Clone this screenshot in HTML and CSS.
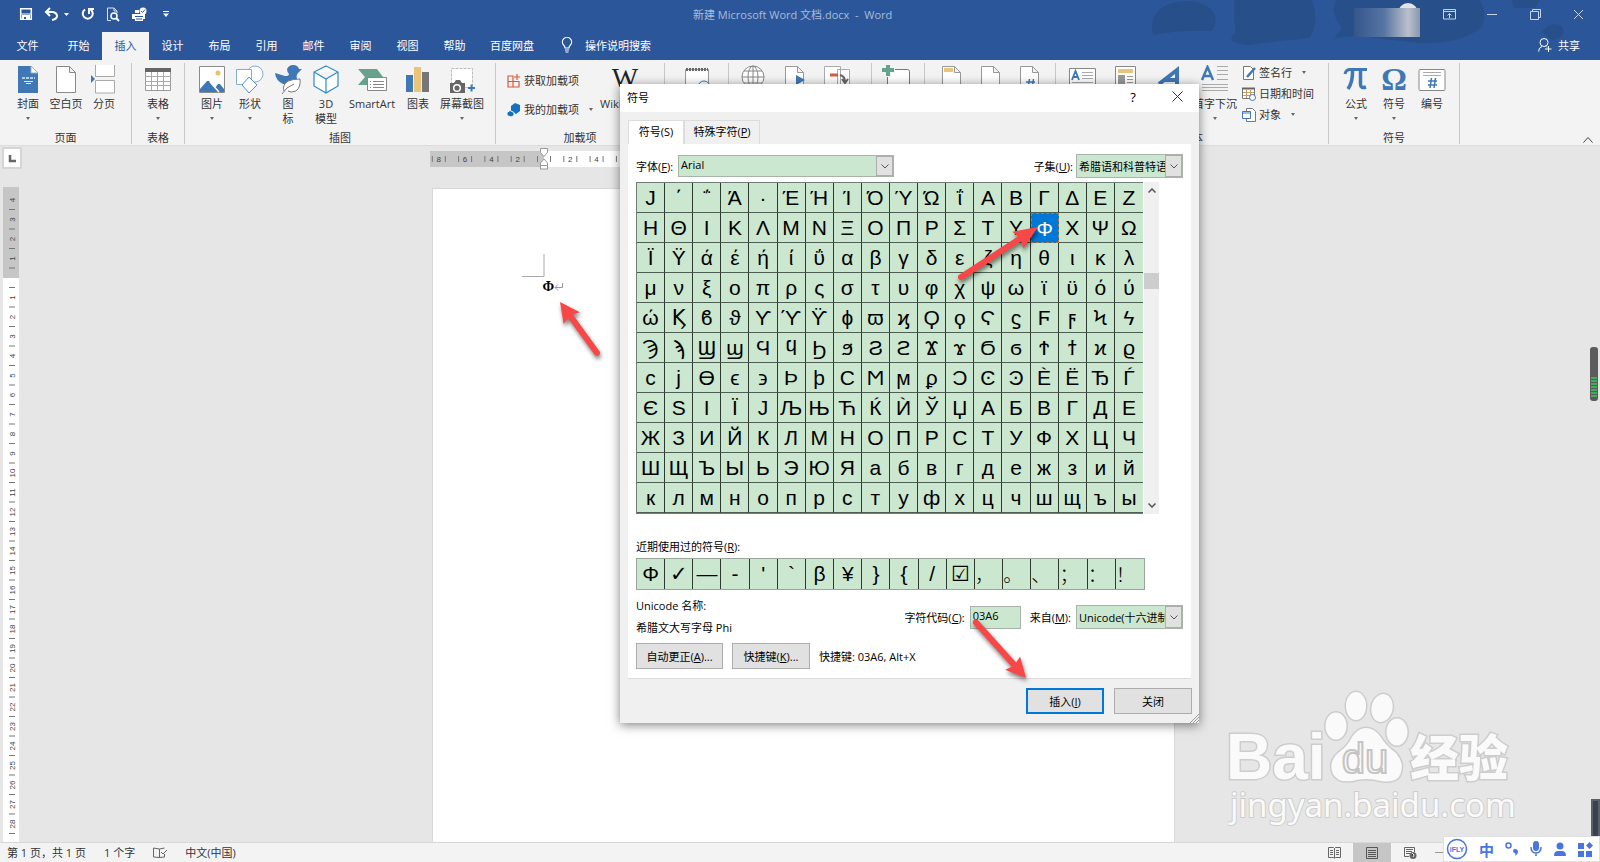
FILE: index.html
```html
<!DOCTYPE html>
<html lang="zh-CN">
<head>
    <meta charset="UTF-8">
    <meta name="viewport" content="width=device-width, initial-scale=1.0">
    <title>新建 Microsoft Word 文档.docx - Word</title>
    <link rel="stylesheet" href="styles.css">
</head>
<body>

<header class="header">
    <svg class="clouds" width="450" height="60" viewBox="0 0 450 60">
        <path d="M3 35Q-2 10 22 3Q45 -3 60 8Q70 20 62 31Q30 30 3 35zM84 0H162Q170 20 160 38Q120 42 100 45Q78 44 82 36Q88 34 84 20zM186 0H330Q338 15 332 27Q310 45 268 43L225 38Q200 34 184 39Q188 32 192 28Q180 15 186 0zM362 0H390L385 8H364zM392 32Q400 20 412 26Q418 38 402 40z"/>
    </svg>
    <div class="titlebar">
        <div class="quick">
            <button aria-label="保存"><svg width="14" height="14" viewBox="0 0 14 14"><path fill="none" stroke="#fff" stroke-width="1.5" d="M1.7 1.7h10.6v10.6H1.7z"/><path fill="#fff" d="M3 8h8v5H3z"/><path fill="#2b579a" d="M5 10h2v2H5z"/><path stroke="#fff" d="M2 7h10"/></svg></button>
            <button aria-label="撤消"><svg width="26" height="14" viewBox="0 0 26 14"><path fill="none" stroke="#fff" stroke-width="2" d="M2 5h7q4 1 4 4t-5 4M6 1L2 5l4 4"/><path fill="#fff" d="M20 6h5l-2.5 3z"/></svg></button>
            <button aria-label="恢复"><svg width="14" height="14" viewBox="0 0 14 14"><path fill="none" stroke="#fff" stroke-width="2" d="M4 2.500A5 5 0 1 0 9.500 2.500M8 7V2h5"/></svg></button>
            <button aria-label="打印预览"><svg width="14" height="15" viewBox="0 0 14 15"><path fill="none" stroke="#dbe4f2" d="M5 13.500H1.500V1H8l3 3v2M8 1v3h3"/><circle cx="8" cy="9" r="3" fill="none" stroke="#fff" stroke-width="1.500"/><path stroke="#fff" stroke-width="2" d="M10 11l3 3"/></svg></button>
            <button aria-label="快速打印"><svg width="16" height="15" viewBox="0 0 16 15"><path fill="#fff" d="M1 7h13v5h-2v2H4v-2H1zM4 3h4v3H4z"/><path fill="none" stroke="#2b579a" d="M4 9.500h8M5 12h6"/><circle cx="12" cy="4" r="3.500" fill="#fff"/><path fill="none" stroke="#2b579a" d="M10 4l1.500 1.500L14 2.500"/></svg></button>
            <button aria-label="自定义快速访问工具栏"><svg width="6" height="6" viewBox="0 0 6 6"><path stroke="#fff" d="M0 .5h6"/><path fill="#fff" d="M0 2.500h6L3 6z"/></svg></button>
        </div>
        <div class="doc-title">新建 Microsoft Word 文档.docx&nbsp; -&nbsp; Word</div>
        <svg class="avatar" width="66" height="34" viewBox="0 0 66 34">
            <defs><linearGradient id="fade"><stop offset="0" stop-color="#34568c"/><stop offset=".45" stop-color="#5674a2"/><stop offset=".82" stop-color="#b9c0ca"/><stop offset="1" stop-color="#8998b0"/></linearGradient></defs>
            <circle cx="54" cy="10" r="10" fill="#e4e4e4"/>
            <path fill="url(#fade)" d="M0 5h66v29H0z"/>
        </svg>
        <div class="window-buttons">
            <button aria-label="功能区显示选项"><svg width="13" height="11" viewBox="0 0 13 11"><path fill="none" stroke="#c6d3e8" d="M.5.5h12v9.500H.5zM.5 2.500h12M6.500 9V4.500M4.500 6.500l2-2 2 2"/></svg></button>
            <button aria-label="最小化"><svg width="11" height="11" viewBox="0 0 11 11"><path stroke="#c6d3e8" d="M0 5.500h10"/></svg></button>
            <button aria-label="还原"><svg width="11" height="11" viewBox="0 0 11 11"><path fill="none" stroke="#c6d3e8" d="M.5 2.500h8v8h-8zM2.500 2.500v-2h8v8h-2"/></svg></button>
            <button aria-label="关闭"><svg width="11" height="11" viewBox="0 0 11 11"><path stroke="#c6d3e8" d="M1 1l9 9M10 1l-9 9"/></svg></button>
        </div>
    </div>
    <nav class="tabs">
        <button class="tab tab-file">文件</button>
        <button class="tab">开始</button>
        <button class="tab active">插入</button>
        <button class="tab">设计</button>
        <button class="tab">布局</button>
        <button class="tab">引用</button>
        <button class="tab">邮件</button>
        <button class="tab">审阅</button>
        <button class="tab">视图</button>
        <button class="tab">帮助</button>
        <button class="tab tab-wide">百度网盘</button>
        <button class="tell-me"><svg width="12" height="16" viewBox="0 0 12 16"><path fill="none" stroke="#fff" stroke-width="1.200" d="M4 11Q4 9 2.500 8A4.600 4.600 0 1 1 9.500 8Q8 9 8 11zM4 13h4M4.500 15h3"/></svg>操作说明搜索</button>
        <button class="share"><svg width="14" height="14" viewBox="0 0 14 14"><circle cx="6" cy="4.500" r="4" fill="none" stroke="#fff"/><path fill="none" stroke="#fff" d="M.5 13.500Q1 9 4 8.500M8 8.500l1 1M7 11h6.500M10.500 8v6"/></svg>共享</button>
    </nav>
</header>

<section class="ribbon">
    <div class="group g-page">
        <div class="tools">
            <button class="tool"><svg width="30" height="30" viewBox="0 0 30 30"><path fill="#3f78b5" d="M5 1h13l7 7v20H5z"/><path fill="#fff" stroke="#8fb1d6" d="M18 1v7h7z"/><path stroke="#dce8f4" stroke-width="1.500" stroke-dasharray="3 1" d="M9 13h13"/><path stroke="#dce8f4" d="M11 16.500h9M13 18.500h5"/></svg>封面<i class="caret"></i></button>
            <button class="tool"><svg width="30" height="30" viewBox="0 0 30 30"><path fill="#fff" stroke="#8a8a8a" d="M5.500 1.500h13l6 6v20h-19zM18.500 1.500v6h6"/></svg>空白页</button>
            <button class="tool"><svg width="30" height="30" viewBox="0 0 30 30"><path fill="#fff" stroke="#aaa" d="M6.500 0v11.500h19V0M6.500 28V15.500h19V28z"/><path fill="#3f78b5" d="M2 10l4 4-4 4z"/></svg>分页</button>
        </div>
        <div class="group-name">页面</div>
    </div>
    <div class="group g-table">
        <div class="tools">
            <button class="tool"><svg width="30" height="30" viewBox="0 0 30 30"><path fill="#fff" stroke="#999" d="M2.500 3.500h25v22h-25z"/><path fill="#666" d="M2 3h26v4H2z"/><path fill="none" stroke="#aaa" d="M2 11.500h26M2 16.500h26M2 20.500h26M8.500 7v18M14.500 7v18M20.500 7v18"/></svg>表格<i class="caret"></i></button>
        </div>
        <div class="group-name">表格</div>
    </div>
    <div class="group g-pictures">
        <div class="tools">
            <button class="tool"><svg width="30" height="30" viewBox="0 0 30 30"><path fill="#fff" stroke="#8a8a8a" d="M2.500 1.500h25v26h-25z"/><path fill="#3f78b5" d="M3 24l7-8h2l6 7 3-4h2l4 5v3H3z"/><path stroke="#fff" stroke-width="1.500" d="M13 17l9 10"/><circle cx="21" cy="8" r="2.500" fill="#e9bf70"/></svg>图片<i class="caret"></i></button>
            <button class="tool"><svg width="30" height="30" viewBox="0 0 30 30"><circle cx="20" cy="9" r="8" fill="#fff" stroke="#85aed6"/><path fill="#fff" stroke="#85aed6" d="M1.500 4.500h15v15h-15z"/><path fill="#fff" stroke="#5a93cb" d="M14 12l8 8-8 8-7-8z"/></svg>形状<i class="caret"></i></button>
            <button class="tool"><svg width="30" height="30" viewBox="0 0 30 30"><path fill="#3f78b5" d="M14 4Q16 0 20 0q5 0 6 4h3l-4 4Q23 10 24 14q-6 7-14 5Q3 16 2 8l10 3q4 0 4-2-2-2-2-5z"/><path fill="#fff" stroke="#777" d="M11 26Q9 20 15 16q5-2 12-2Q28 22 23 26q-5 2-8 0M9 29Q13 22 21 19"/></svg><span>图<br>标</span></button>
            <button class="tool"><svg width="30" height="30" viewBox="0 0 30 30"><path fill="#fff" stroke="#2f8bcb" stroke-width="1.200" d="M15 1l12 6v14l-12 7-12-7V7zM3 7l12 7 12-7M15 14v14"/></svg><span>3D<br>模型</span></button>
            <button class="tool tool-smart"><svg width="30" height="30" viewBox="0 0 30 30"><path fill="#67a38c" d="M1 4h19l6 8v8H1l7-8z"/><path fill="#fff" stroke="#888" d="M10.500 12.500h19v13h-19z"/><path stroke="#888" d="M13 16.500h1m2 0h11M13 19.500h1m2 0h11M13 22.500h1m2 0h11"/></svg>SmartArt</button>
            <button class="tool"><svg width="30" height="30" viewBox="0 0 30 30"><path fill="#3f78b5" d="M3 10h7v17H3z"/><path fill="#e9c47a" d="M11 2h7v25h-7z"/><path fill="#777" d="M19 7h7v20h-7z"/></svg>图表</button>
            <button class="tool tool-shot"><svg width="30" height="30" viewBox="0 0 30 30"><path fill="#fff" stroke="#bbb" stroke-dasharray="3 1" d="M4.500 3.500h21v19h-21z"/><path fill="#666" d="M3 18h4l2-3h4l2 3h3v10H3z"/><circle cx="10" cy="23" r="3.300" fill="#666" stroke="#fff" stroke-width="1.500"/><path stroke="#3f78b5" stroke-width="2" d="M21 23h7M24.500 19.500v7"/></svg>屏幕截图<i class="caret"></i></button>
        </div>
        <div class="group-name">插图</div>
    </div>
    <div class="group g-addins">
        <div class="tools">
            <div class="addin-list">
                <button class="small-tool"><svg width="14" height="14" viewBox="0 0 14 14"><path fill="none" stroke="#d65b3d" stroke-width="1.200" d="M1 2h5v11H1zM1 7.500h11V13H6M10 0v6M7 3h6"/></svg>获取加载项</button>
                <button class="small-tool"><svg width="14" height="14" viewBox="0 0 14 14"><path fill="#1470c0" d="M8 0l5 2v6l-4 3-5-3V3z"/><path fill="#1470c0" stroke="#f3f3f3" d="M3 7.500l4 2v3L4 14l-4-1.500v-3z"/></svg>我的加载项<i class="caret"></i></button>
            </div>
            <button class="tool tool-wiki"><svg width="30" height="30" viewBox="0 0 30 30"><text x="15" y="22" text-anchor="middle" class="icon-serif">W</text></svg>Wikipedia</button>
        </div>
        <div class="group-name">加载项</div>
    </div>
    <div class="group g-media">
        <div class="tools"><button class="tool" aria-label="联机视频"><svg width="30" height="30" viewBox="0 0 30 30"><path fill="#fff" stroke="#999" d="M3.500 4.500h23v24h-23z"/><path stroke="#666" stroke-width="3" stroke-dasharray="2 1" d="M4 4.500h22"/><circle cx="22" cy="22" r="6" fill="#fff" stroke="#3f78b5"/></svg></button></div>
    </div>
    <div class="group g-links">
        <div class="tools">
            <button class="tool" aria-label="链接"><svg width="30" height="30" viewBox="0 0 30 30"><g fill="none" stroke="#888"><circle cx="15" cy="12" r="11" fill="#fff"/><ellipse cx="15" cy="12" rx="5" ry="11"/><path d="M15 1v22M4 12h22M6 6h18M6 18h18"/></g></svg></button>
            <button class="tool" aria-label="书签"><svg width="30" height="30" viewBox="0 0 30 30"><path fill="#fff" stroke="#999" d="M5.500 1.500h12l6 6v20h-18zM17.500 1.500v6h6"/><path fill="#3f78b5" d="M16 10l9 5-9 5z"/></svg></button>
            <button class="tool" aria-label="交叉引用"><svg width="30" height="30" viewBox="0 0 30 30"><path fill="#fff" stroke="#aaa" d="M15.500 4.500h12v20h-12zM2.500 1.500h16v26h-16z"/><path stroke="#d65b3d" stroke-width="3" d="M8 10h8"/><path fill="none" stroke="#666" stroke-width="2" d="M18 10q5 1 5 7M20 14l3 4 3-4"/></svg></button>
        </div>
    </div>
    <div class="group g-comment">
        <div class="tools"><button class="tool" aria-label="批注"><svg width="30" height="30" viewBox="0 0 30 30"><path fill="#fff" stroke="#777" d="M5.500 4.500h20q2 0 2 2v20h-22z"/><path stroke="#f3f3f3" stroke-width="6" d="M0 5h13M6 0v12"/><path stroke="#67a38c" stroke-width="4" d="M0 5h12M6 0v11"/></svg></button></div>
    </div>
    <div class="group g-header">
        <div class="tools">
            <button class="tool" aria-label="页眉"><svg width="30" height="30" viewBox="0 0 30 30"><path fill="#fff" stroke="#999" d="M5.500 1.500h12l6 6v20h-18zM17.500 1.500v6h6"/><path fill="#e9c47a" d="M7 3h9v4H7z"/></svg></button>
            <button class="tool" aria-label="页脚"><svg width="30" height="30" viewBox="0 0 30 30"><path fill="#fff" stroke="#999" d="M5.500 1.500h12l6 6v20h-18zM17.500 1.500v6h6"/></svg></button>
            <button class="tool" aria-label="页码"><svg width="30" height="30" viewBox="0 0 30 30"><path fill="#fff" stroke="#999" d="M5.500 1.500h12l6 6v20h-18zM17.500 1.500v6h6"/><path stroke="#3f78b5" stroke-width="1.500" d="M11 17h9M11 20h9M14.500 14l-1.500 9M18.500 14l-1.500 9"/></svg></button>
        </div>
    </div>
    <div class="group g-text">
        <div class="tools">
            <button class="tool tool-text" aria-label="文本框"><svg width="30" height="30" viewBox="0 0 30 30"><path fill="#fff" stroke="#888" d="M1.500 3.500h26v22h-26z"/><path fill="none" stroke="#3f78b5" stroke-width="1.800" d="M4 15l3.500-9L11 15M5 12h5"/><path stroke="#aaa" d="M14 7.500h11M14 10.500h11M14 13.500h11M4 17.500h21"/></svg></button>
            <button class="tool tool-text" aria-label="文档部件"><svg width="30" height="30" viewBox="0 0 30 30"><path fill="#fff" stroke="#888" d="M3.500 1.500h20v26h-20z"/><path fill="#e9c47a" d="M6 4h15v4H6z"/><path fill="#999" d="M6 10h7v9H6z"/><path stroke="#999" d="M15 11.500h6M15 14.500h6M15 17.500h6"/></svg></button>
            <button class="tool tool-text" aria-label="艺术字"><svg width="30" height="30" viewBox="0 0 30 30"><path fill="none" stroke="#3f78b5" stroke-width="4" d="M3 19L21 5v15M9 15h12"/></svg></button>
            <button class="tool tool-text"><svg width="30" height="30" viewBox="0 0 30 30"><path fill="none" stroke="#3f78b5" stroke-width="2.500" d="M2 15L7.500 2 13 15M4 11h7"/><path stroke="#aaa" d="M17 1.500h11M17 5.500h11M17 9.500h11M17 14.500h11M2 19.500h26M2 22.500h26M2 25.500h26"/></svg>首字下沉<i class="caret"></i></button>
            <div class="text-list">
                <button class="small-tool"><svg width="14" height="14" viewBox="0 0 14 14"><path fill="#fff" stroke="#777" d="M1.500.5h7l3 3v10h-10z"/><path stroke="#3f78b5" stroke-width="2.500" d="M5 11l8-9"/></svg>签名行<i class="caret"></i></button>
                <button class="small-tool"><svg width="14" height="14" viewBox="0 0 14 14"><path fill="#fff" stroke="#777" d="M.5 1.500h12v10H.5z"/><path stroke="#666" stroke-width="2" d="M0 1.500h13"/><path fill="none" stroke="#c9a06a" d="M1 5.500h11M1 8.500h11M4.500 3v8M8.500 3v8"/><circle cx="10.500" cy="10.500" r="3" fill="#fff" stroke="#3f78b5"/></svg>日期和时间</button>
                <button class="small-tool"><svg width="14" height="14" viewBox="0 0 14 14"><path fill="#fff" stroke="#777" d="M4.500.5h6l3 3v10h-9z"/><path fill="#fff" stroke="#3f78b5" d="M.5 3.500h8v7h-8zM.5 5h8"/></svg>对象<i class="caret"></i></button>
            </div>
        </div>
        <div class="group-name">文本</div>
    </div>
    <div class="group g-symbols">
        <div class="tools">
            <button class="tool"><svg width="30" height="30" viewBox="0 0 30 30"><path fill="none" stroke="#3f78b5" stroke-width="3" d="M4 9Q5 4.500 9 4.500H26"/><path fill="none" stroke="#3f78b5" stroke-width="3.500" d="M11.500 5Q12 17 7 24M19.500 5v14q0 5 5.500 3"/></svg>公式<i class="caret"></i></button>
            <button class="tool"><svg width="30" height="30" viewBox="0 0 30 30"><text x="15" y="25" text-anchor="middle" class="icon-omega">Ω</text></svg>符号<i class="caret"></i></button>
            <button class="tool"><svg width="30" height="30" viewBox="0 0 30 30"><rect x="2" y="4.500" width="26" height="21" rx="1" fill="#fff" stroke="#888"/><path stroke="#aaa" d="M6 7.500h18M6 10.500h18"/><path stroke="#3f78b5" stroke-width="1.500" d="M11 16h9M11 20h9M14.500 13l-1.500 10M18.500 13l-1.500 10"/></svg>编号</button>
        </div>
        <div class="group-name">符号</div>
    </div>
    <button class="collapse" aria-label="折叠功能区"><svg width="10" height="6" viewBox="0 0 10 6"><path fill="none" stroke="#444" d="M.5 5.500l4.500-5 4.500 5"/></svg></button>
</section>

<main class="workspace">
    <div class="ruler-row">
        <button class="tab-stop" aria-label="左对齐式制表符"><svg width="8" height="8" viewBox="0 0 8 8"><path fill="none" stroke="#666" stroke-width="2.500" d="M2 0v6h6"/></svg></button>
        <svg class="h-ruler" id="hRuler" width="744" height="24"></svg>
    </div>
    <svg class="v-ruler" id="vRuler" width="16" height="656"></svg>
    <article class="page">
        <svg class="corner" width="24" height="24" viewBox="0 0 24 24"><path fill="none" stroke="#aaa" d="M1 22.500h22V0"/></svg>
        <p class="page-text">Φ<svg width="9" height="8" viewBox="0 0 9 8"><path fill="none" stroke="#999" d="M8.500 0v4.500H1M4 1.500l-3 3 3 3"/></svg></p>
    </article>
    <svg class="meter" width="8" height="54" viewBox="0 0 8 54"><rect width="8" height="54" rx="3" fill="#5c5c5c"/><path stroke="#3fae5c" stroke-width="6" stroke-dasharray="2 1" d="M4 30v21"/></svg>
    <div class="side-handle"></div>
    <svg class="watermark" width="300" height="140" viewBox="0 0 300 140">
        <g class="wm-shape">
            <text x="-2" y="89" class="wm-bai">Bai</text>
            <ellipse cx="108" cy="36" rx="10.500" ry="13.500"/>
            <ellipse cx="128" cy="16" rx="10" ry="14"/>
            <ellipse cx="154" cy="18" rx="10.500" ry="14" transform="rotate(12 154 18)"/>
            <ellipse cx="169" cy="42" rx="10.500" ry="13.500"/>
            <path d="M138 38Q146 38 152 46Q158 56 168 63Q178 75 171 87Q165 93 153 91Q138 87 124 91Q110 93 105 84Q100 72 110 63Q120 56 124 47Q130 38 138 38z"/>
            <text x="182" y="86" class="wm-cn">经验</text>
        </g>
        <text x="137" y="83" text-anchor="middle" class="wm-du">du</text>
        <text x="2" y="127" class="wm-url">jingyan.baidu.com</text>
    </svg>
</main>

<footer class="status">
    <span>第 1 页，共 1 页</span>
    <span>1 个字</span>
    <svg width="14" height="12" viewBox="0 0 14 12"><path fill="none" stroke="#666" d="M6.500 10.500l-6-.5V1l6 1v9M6.500 2l5-1M6.500 10.500l5-.5V7M8 5l2 2 4-4"/></svg>
    <span>中文(中国)</span>
    <div class="views">
        <button aria-label="阅读视图"><svg width="13" height="12" viewBox="0 0 13 12"><path fill="none" stroke="#666" d="M.5.5h5l1 1 1-1h5v10h-5l-1 1-1-1h-5zM6.500 1v10M2 3.500h3M2 5.500h3M2 7.500h3M8 3.500h3M8 5.500h3M8 7.500h3"/></svg></button>
        <button class="selected" aria-label="页面视图"><svg width="12" height="12" viewBox="0 0 12 12"><path fill="none" stroke="#555" d="M.5.5h11v11H.5zM2 3.500h8M2 5.500h8M2 7.500h8M2 9.500h8"/></svg></button>
        <button aria-label="Web 版式视图"><svg width="13" height="12" viewBox="0 0 13 12"><path fill="none" stroke="#666" d="M5 9.500H.5v-9h10V5M2 2.500h7M2 4.500h6M2 6.500h4"/><circle cx="9" cy="8.500" r="3.500" fill="#666"/><path stroke="#f3f3f3" d="M8 6l2 2-1 2"/></svg></button>
        <button class="zoom-out" aria-label="缩小"><svg width="8" height="1" viewBox="0 0 8 1"><path fill="#999" d="M0 0h8v1H0z"/></svg></button>
    </div>
    <div class="ime">
        <svg width="22" height="22" viewBox="0 0 22 22"><circle cx="11" cy="11" r="9.500" fill="none" stroke="#4a74e0" stroke-width="1.500"/><text x="11" y="14" text-anchor="middle" class="ime-logo">iFLY</text></svg>
        <span class="ime-cn">中</span>
        <svg width="14" height="14" viewBox="0 0 14 14"><circle cx="3.500" cy="3.500" r="2.500" fill="none" stroke="#4a74e0" stroke-width="1.500"/><path fill="#4a74e0" d="M8 9q0-2 2-2 3 0 3 3 0 2-3 4 1-2 0-3-2 0-2-2z"/></svg>
        <svg width="12" height="16" viewBox="0 0 12 16"><rect x="3" width="6" height="10" rx="3" fill="#4a74e0"/><path fill="none" stroke="#4a74e0" stroke-width="1.500" d="M1 6q0 6 5 6t5-6M6 12v3"/></svg>
        <svg width="14" height="15" viewBox="0 0 14 15"><circle cx="7" cy="4" r="3.500" fill="#4a74e0"/><path fill="#4a74e0" d="M1 14q0-5 4-5h4q4 0 4 5z"/></svg>
        <svg width="15" height="15" viewBox="0 0 15 15"><path fill="#4a74e0" d="M0 1h6v6H0zM0 9h6v6H0zM8 9h6v6H8zM11.500 0L15 3.500 11.500 7 8 3.500z"/></svg>
    </div>
</footer>

<div class="dialog" role="dialog" aria-labelledby="dialogTitle">
    <div class="dialog-title">
        <span id="dialogTitle">符号</span>
        <button aria-label="帮助">?</button>
        <button aria-label="关闭"><svg width="11" height="11" viewBox="0 0 11 11"><path stroke="#333" d="M.5.5l10 10M10.500.5l-10 10"/></svg></button>
    </div>
    <div class="dialog-tabs">
        <button class="dialog-tab current">符号(S)</button>
        <button class="dialog-tab">特殊字符(<u>P</u>)</button>
    </div>
    <div class="pane">
        <div class="field-row">
            <label for="font">字体(<u>F</u>):</label>
            <div class="combo combo-font">
                <select id="font"><option>Arial</option></select>
                <span class="arrow"><svg width="8" height="5" viewBox="0 0 8 5"><path fill="none" stroke="#555" d="M.5.5L4 4 7.500.5"/></svg></span>
            </div>
            <label for="subset" class="push">子集(<u>U</u>):</label>
            <div class="combo combo-short">
                <select id="subset"><option>希腊语和科普特语</option></select>
                <span class="arrow"><svg width="8" height="5" viewBox="0 0 8 5"><path fill="none" stroke="#555" d="M.5.5L4 4 7.500.5"/></svg></span>
            </div>
        </div>
        <div class="chars">
            <div class="char-grid" id="charGrid"></div>
            <div class="scroll">
                <svg width="8" height="5" viewBox="0 0 8 5"><path fill="none" stroke="#555" stroke-width="1.500" d="M.5 4.500L4 1l3.500 3.500"/></svg>
                <div class="thumb"></div>
                <svg width="8" height="5" viewBox="0 0 8 5"><path fill="none" stroke="#555" stroke-width="1.500" d="M.5.5L4 4 7.500.5"/></svg>
            </div>
        </div>
        <div class="recent-label">近期使用过的符号(<u>R</u>):</div>
        <div class="recent" id="recent"></div>
        <div class="info">
            <div class="unicode-name">
                <div>Unicode 名称:</div>
                <div>希腊文大写字母 Phi</div>
            </div>
            <label for="code">字符代码(<u>C</u>):</label>
            <input type="text" id="code" value="03A6">
            <label for="from" class="from-label">来自(<u>M</u>):</label>
            <div class="combo combo-short">
                <select id="from"><option>Unicode(十六进制)</option></select>
                <span class="arrow"><svg width="8" height="5" viewBox="0 0 8 5"><path fill="none" stroke="#555" d="M.5.5L4 4 7.500.5"/></svg></span>
            </div>
        </div>
        <div class="actions">
            <button class="btn btn-auto">自动更正(<u>A</u>)...</button>
            <button class="btn">快捷键(<u>K</u>)...</button>
            <span>快捷键: 03A6, Alt+X</span>
        </div>
    </div>
    <div class="dialog-footer">
        <button class="btn primary">插入(<u>I</u>)</button>
        <button class="btn">关闭</button>
    </div>
    <svg class="grip" width="9" height="9" viewBox="0 0 9 9"><path stroke="#999" d="M0 9l9-9M3 9l6-6M6 9l3-3"/></svg>
</div>

<svg class="arrows" width="1600" height="862" viewBox="0 0 1600 862">
    <g transform="translate(1038 227) rotate(147)"><path d="M0 0L24 -10L22 -3L93 -3Q97 0 93 3L22 3L24 10z"/></g>
    <g transform="translate(560 302) rotate(54)"><path d="M0 0L20 -10L18 -3L64 -3Q68 0 64 3L18 3L20 10z"/></g>
    <g transform="translate(1026 678) rotate(228)"><path d="M0 0L20 -10L18 -3L76 -3Q80 0 76 3L18 3L20 10z"/></g>
</svg>

<script>
    const rows = [
        "J΄΅Ά·ΈΉΊΌΎΏΐΑΒΓΔΕΖ",
        "ΗΘΙΚΛΜΝΞΟΠΡΣΤΥΦΧΨΩ",
        "ΪΫάέήίΰαβγδεζηθικλ",
        "μνξοπρςστυφχψωϊϋόύ",
        "ώϏϐϑϒϓϔϕϖϗϘϙϚϛϜϝϞϟ",
        "ϠϡϢϣϤϥϦϧϨϩϪϫϬϭϮϯϰϱ",
        "ϲϳϴϵ϶ϷϸϹϺϻϼϽϾϿЀЁЂЃ",
        "ЄЅІЇЈЉЊЋЌЍЎЏАБВГДЕ",
        "ЖЗИЙКЛМНОПРСТУФХЦЧ",
        "ШЩЪЫЬЭЮЯабвгдежзий",
        "клмнопрстуфхцчшщъы"
    ];
    const recent = "Φ✓—-'`β¥}{/☑，。、；：！";

    function addCells(box, text, selected) {
        for (const ch of text) {
            const cell = document.createElement("button");
            cell.className = ch === selected ? "cell selected" : "cell";
            cell.textContent = ch;
            // full-width punctuation is drawn lighter
            if ("，。、；：！".includes(ch)) cell.classList.add("wide");
            box.appendChild(cell);
        }
    }
    rows.forEach((row, i) => addCells(document.getElementById("charGrid"), row, i === 1 ? "Φ" : null));
    addCells(document.getElementById("recent"), recent);

    // horizontal ruler, zero at x = 114
    let h = '<rect y="4" width="744" height="16" fill="#fff"/><rect y="4" width="114" height="16" fill="#c6c6c6"/>';
    for (let n = -8; n <= 46; n += 2) {
        const x = 114 + n * 13.15;
        if (n) h += `<text x="${x}" y="15" text-anchor="middle">${Math.abs(n)}</text>`;
        h += `<path d="M${x - 6.5} 9v6M${x + 6.5} 9v6"/>`;
    }
    h += '<path class="indent" d="M110.500 1.500h7v4l-3.500 4-3.500-4zM114 12l3.500 4v6h-7v-6zM110.500 18.500h7"/>';
    document.getElementById("hRuler").innerHTML = h;

    // vertical ruler, zero at y = 91
    let v = '<rect width="16" height="656" fill="#fff"/><rect width="16" height="91" fill="#c6c6c6"/>';
    for (let n = -4; n <= 28; n++) {
        const y = 91 + n * 19.5;
        if (n) v += `<text transform="translate(12 ${y}) rotate(-90)" text-anchor="middle">${Math.abs(n)}</text>`;
        v += `<path d="M6 ${y + 9.5}h6"/>`;
    }
    document.getElementById("vRuler").innerHTML = v;
</script>

</body>
</html>
```
FILE: styles.css
```css
* {
    box-sizing: border-box;
}
body {
    margin: 0;
    height: 100vh;
    display: flex;
    flex-direction: column;
    overflow: hidden;
    position: relative;
    font-family: "Open Sans", "Noto Sans CJK SC", sans-serif;
    font-size: 11px;
    line-height: 15px;
    color: #333;
    background: #e6e6e6;
}
button, select, input {
    font: inherit;
    color: inherit;
    margin: 0;
    padding: 0;
    border: 0;
    background: none;
}
svg {
    flex: none;
}

/* title bar and tabs */
.header {
    position: relative;
    background: #2b579a;
    color: #fff;
}
.clouds {
    position: absolute;
    right: 0;
    top: 0;
    fill: #264c84;
    opacity: 0.7;
}
.titlebar {
    position: relative;
    height: 32px;
    display: flex;
    align-items: center;
    padding-bottom: 4px;
}
.quick {
    flex: 0 0 693px;
    display: flex;
    align-items: center;
    gap: 11px;
    padding-left: 19px;
}
.quick button, .window-buttons button {
    display: flex;
    justify-content: center;
}
.quick button:last-child {
    padding-left: 5px;
}
.doc-title {
    flex: 1;
    color: #a9bcd9;
}
.avatar {
    align-self: flex-start;
    margin: 3px 0 -9px;
}
.window-buttons {
    display: flex;
    padding-left: 8px;
}
.window-buttons button {
    width: 43px;
}
.tabs {
    position: relative;
    display: flex;
    height: 28px;
}
.tab {
    width: 47px;
    padding-bottom: 2px;
}
.tab-file {
    width: 55px;
}
.tab-wide {
    width: 68px;
}
.tab.active {
    background: #f3f3f3;
    color: #2b579a;
}
.tell-me, .share {
    display: flex;
    align-items: center;
    gap: 12px;
    padding: 0 0 2px 15px;
}
.share {
    gap: 6px;
    margin-left: auto;
    padding-right: 20px;
}

/* ribbon */
.ribbon {
    display: flex;
    height: 86px;
    padding: 3px 0 1px;
    background: #f3f3f3;
    border-bottom: 1px solid #dcdcdc;
    position: relative;
}
.group {
    flex: none;
    display: flex;
    flex-direction: column;
    justify-content: space-between;
    border-right: 1px solid #c8c8c8;
}
.tools {
    display: flex;
    padding-left: 9px;
}
.group-name {
    text-align: center;
    line-height: 13px;
}
.tool {
    width: 38px;
    flex: none;
    display: flex;
    flex-direction: column;
    align-items: center;
    padding-top: 2px;
    white-space: nowrap;
    line-height: 15px;
}
.tool svg {
    margin-bottom: 1px;
}
.caret {
    border: 2px solid transparent;
    border-top: 3px solid #666;
    border-bottom: 0;
    margin-top: 6px;
}
.tool-smart {
    width: 54px;
}
.tool-shot {
    width: 50px;
}
.tool-wiki {
    width: 54px;
}
.small-tool {
    display: flex;
    align-items: center;
    gap: 3px;
    white-space: nowrap;
}
.small-tool .caret {
    margin: 0 0 0 7px;
}
.g-page { width: 132px; }
.g-table { width: 53px; }
.g-table .tools { padding-left: 7px; }
.g-pictures { width: 311px; }
.g-pictures .tools { padding-left: 8px; }
.g-addins { width: 169px; }
.g-media { width: 64px; }
.g-media .tools { padding-left: 13px; }
.g-links { width: 143px; }
.g-links .tools { padding-left: 5px; gap: 4px; }
.g-comment { width: 53px; }
.g-comment .tools { padding-left: 6px; }
.g-header { width: 131px; }
.g-header .tools { padding-left: 8px; gap: 1px; }
.g-text { width: 273px; }
.g-text .tools { padding-left: 5px; }
.g-symbols { width: 131px; }
.g-symbols .tools { padding-left: 8px; }
.addin-list, .text-list {
    display: flex;
    flex-direction: column;
}
.addin-list {
    gap: 14px;
    padding: 10px 5px 0 2px;
}
.text-list {
    gap: 6px;
    padding: 2px 0 0 5px;
}
.tool-text {
    width: 44px;
}
.icon-serif {
    font: 28px "Liberation Serif", serif;
    fill: #222;
}
.icon-omega {
    font: bold 32px "Liberation Serif", serif;
    fill: #3f78b5;
}
.collapse {
    position: absolute;
    right: 7px;
    bottom: 2px;
    line-height: 0;
}

/* document area */
.workspace {
    flex: 1;
    position: relative;
    min-height: 0;
    overflow: hidden;
}
.ruler-row {
    display: flex;
    height: 42px;
    align-items: flex-start;
    gap: 408px;
    padding: 1px 0 0 2px;
}
.tab-stop {
    width: 20px;
    height: 22px;
    background: #fff;
    border: 2px solid #d5d5d5;
}
.h-ruler text, .v-ruler text {
    font: 8px "Liberation Sans", sans-serif;
    fill: #444;
}
.h-ruler path, .v-ruler path {
    stroke: #777;
}
.h-ruler .indent {
    fill: #fff;
    stroke: #999;
}
.v-ruler {
    position: absolute;
    left: 3px;
    top: 41px;
}
.page {
    width: 743px;
    height: 100%;
    margin: 0 auto;
    background: #fff;
    border: 1px solid #d8d8d8;
    padding: 65px 88px;
    position: relative;
    left: 3px;
}
.corner {
    display: block;
}
.page-text {
    margin: 0 0 0 22px;
    color: #000;
    font: bold 14px/18px "Liberation Serif", serif;
}
.meter {
    position: absolute;
    right: 2px;
    top: 201px;
}
.side-handle {
    position: absolute;
    right: 0;
    bottom: 0;
    width: 9px;
    height: 43px;
    background: #3a424d;
    border: 2px solid #59626c;
}
.watermark {
    position: absolute;
    right: 72px;
    bottom: 12px;
}
.wm-shape, .wm-url {
    fill: #fafafa;
    stroke: #cdcdcd;
    stroke-width: 3px;
    paint-order: stroke;
}
.wm-bai {
    font: bold 64px "Liberation Sans", sans-serif;
}
.wm-cn {
    font: 900 49px "Noto Sans CJK SC", sans-serif;
}
.wm-du {
    font: 42px "Liberation Sans", sans-serif;
    fill: #fafafa;
    stroke: #c4c4c4;
    stroke-width: 2px;
}
.wm-url {
    font: 33px "Noto Sans", sans-serif;
    stroke-width: 2px;
}

/* status bar */
.status {
    height: 20px;
    display: flex;
    align-items: center;
    gap: 18px;
    padding-left: 7px;
    background: #f3f3f3;
    border-top: 1px solid #d8d8d8;
}
.views {
    margin-left: auto;
    display: flex;
    align-self: stretch;
}
.views button {
    width: 38px;
    display: flex;
    align-items: center;
    justify-content: center;
}
.views .selected {
    background: #c6c6c6;
}
.views .zoom-out {
    width: 14px;
    justify-content: flex-end;
}
.ime {
    width: 157px;
    height: 26px;
    align-self: flex-end;
    margin-left: -18px;
    padding: 0 6px 0 2px;
    display: flex;
    align-items: center;
    justify-content: space-between;
    background: #fff;
    border: 1px solid #e0e0e0;
    color: #4a74e0;
    position: relative;
}
.ime-cn {
    font: bold 15px "Noto Sans CJK SC", sans-serif;
}
.ime-logo {
    font: bold 7px "Liberation Sans", sans-serif;
    fill: #4a74e0;
}

/* symbol dialog */
.dialog {
    position: absolute;
    left: 620px;
    top: 84px;
    width: 579px;
    color: #000;
    background: #f0f0f0;
    box-shadow: 0 2px 10px rgba(0, 0, 0, 0.5);
}
.dialog-title {
    height: 28px;
    display: flex;
    align-items: center;
    background: #fff;
    padding: 0 0 2px 7px;
}
.dialog-title span {
    flex: 1;
}
.dialog-title button {
    width: 44px;
    font-size: 13px;
}
.dialog-tabs {
    display: flex;
    padding: 8px 8px 0;
}
.dialog-tab {
    height: 24px;
    width: 76px;
    padding-bottom: 2px;
    border: 1px solid #dcdcdc;
    border-bottom: 0;
}
.dialog-tab.current {
    width: 56px;
    background: #fff;
}
.pane {
    margin: 0 8px;
    padding: 10px 8px 9px;
    background: #fff;
    border-bottom: 1px solid #dcdcdc;
}
.field-row {
    display: flex;
    align-items: center;
    height: 24px;
    margin-bottom: 4px;
}
.push {
    margin-left: auto;
}
.combo {
    display: flex;
    height: 24px;
    margin-left: 3px;
    background: #cbe7cf;
    border: 1px solid #a9b5ab;
}
.combo select {
    flex: 1;
    min-width: 0;
    appearance: none;
    padding-left: 2px;
    outline: 0;
    text-overflow: clip;
}
.combo-font {
    width: 216px;
    height: 22px;
    margin-left: 5px;
}
.combo-font select {
    padding: 0 0 3px 2px;
}
.combo-short {
    width: 107px;
}
.arrow {
    width: 17px;
    display: flex;
    align-items: center;
    justify-content: center;
    background: #e1e1e1;
    border: 1px solid #adadad;
}
.chars {
    display: flex;
    gap: 1px;
}
.char-grid {
    width: 507px;
    display: grid;
    grid-template-columns: repeat(18, 1fr);
    grid-auto-rows: 30px;
    background: #cbe7cf;
    border-top: 1px solid #6f7f73;
    border-left: 1px solid #6f7f73;
    border-bottom: 1px solid #6f7f73;
}
.cell {
    border-right: 1px solid #2c3a30;
    border-bottom: 1px solid #4d5f52;
    color: #000;
    font: 21px/28px "Liberation Sans", "DejaVu Sans", sans-serif;
    overflow: hidden;
}
.char-grid .cell {
    padding-top: 1px;
}
.char-grid .cell:nth-child(18n) {
    border-right: 0;
}
.cell.selected {
    background: #0078d7;
    color: #fff;
    border: 1px dashed #b07a3c;
}
.scroll {
    width: 15px;
    display: flex;
    flex-direction: column;
    align-items: center;
    background: #f0f0f0;
    padding: 6px 0;
}
.thumb {
    width: 15px;
    height: 16px;
    background: #cdcdcd;
    margin: 80px 0 auto;
}
.recent-label {
    margin: 25px 0 3px;
    line-height: 16px;
}
.recent {
    width: 509px;
    height: 32px;
    display: grid;
    grid-template-columns: repeat(18, 1fr);
    background: #cbe7cf;
    border: 1px solid #9aa69c;
}
.recent .cell {
    border-bottom: 0;
}
.recent .cell:last-child {
    border-right: 0;
}
.cell.wide {
    font: 300 19px/28px "Noto Sans CJK SC", sans-serif;
    text-align: left;
}
.info {
    display: flex;
    align-items: center;
    margin-top: 8px;
}
.unicode-name {
    flex: 1;
    display: flex;
    flex-direction: column;
    gap: 6px;
    line-height: 16px;
}
.info input {
    width: 51px;
    height: 23px;
    margin-left: 5px;
    padding: 0 2px 3px;
    background: #cbe7cf;
    border: 1px solid #a9b5ab;
}
.from-label {
    margin-left: 9px;
}
.from-label + .combo {
    margin-left: 5px;
}
.actions {
    display: flex;
    align-items: center;
    gap: 9px;
    margin-top: 7px;
}
.btn {
    height: 26px;
    min-width: 78px;
    background: #e1e1e1;
    border: 1px solid #adadad;
}
.btn-auto {
    width: 87px;
}
.primary {
    border: 2px solid #0078d7;
}
.dialog-footer {
    display: flex;
    justify-content: flex-end;
    gap: 10px;
    padding: 9px 7px;
}
.grip {
    position: absolute;
    right: 0;
    bottom: 0;
}

/* pointer arrows */
.arrows {
    position: absolute;
    left: 0;
    top: 0;
    fill: #f94747;
    pointer-events: none;
    filter: drop-shadow(1px 3px 2px rgba(0, 0, 0, 0.5));
}
```
